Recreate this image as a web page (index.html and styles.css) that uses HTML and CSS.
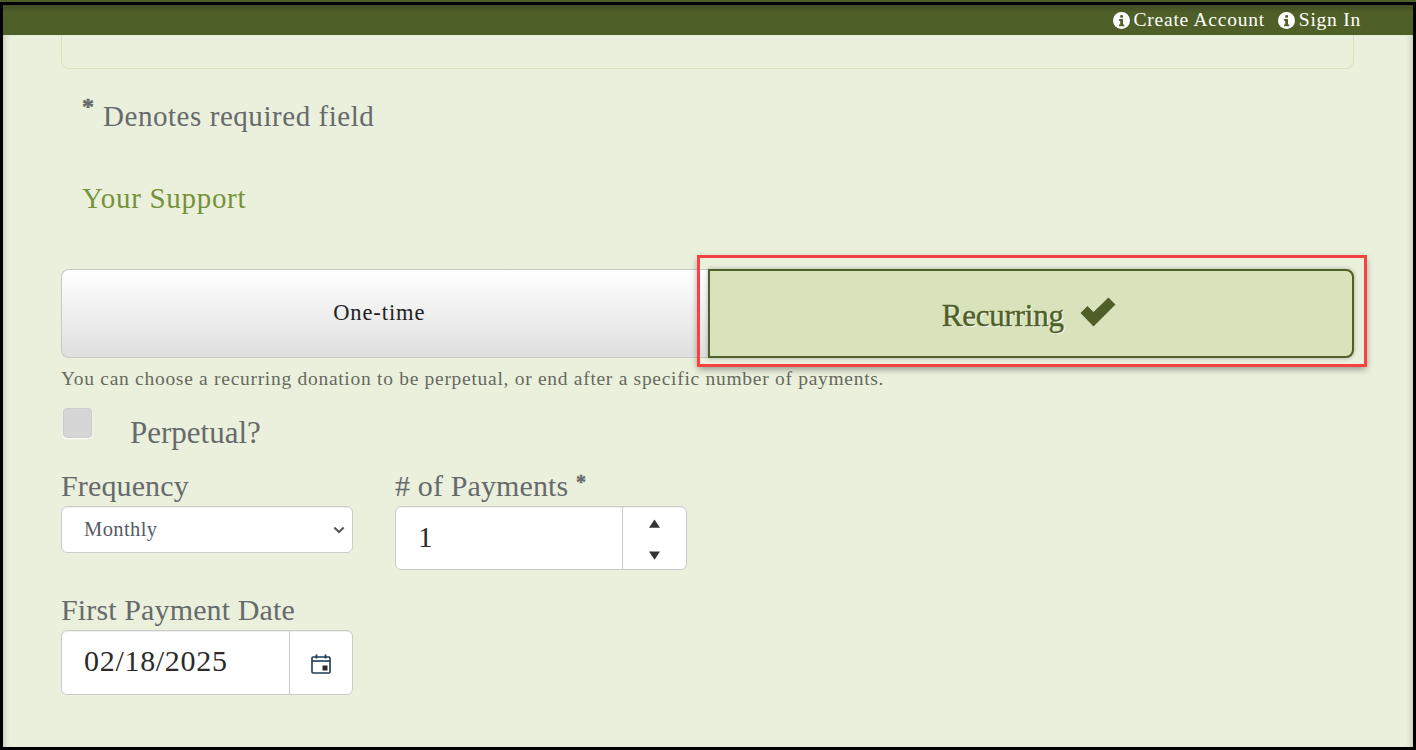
FILE: index.html
```html
<!DOCTYPE html>
<html lang="en">
<head>
<meta charset="utf-8">
<title>Your Support</title>
<link rel="stylesheet" href="styles.css">
</head>
<body>
<div class="frame">
  <header class="topbar">
    <a class="toplink"><svg class="info" viewBox="0 0 16 16"><circle cx="8" cy="8" r="8" fill="#fff"/><rect x="6.800" y="3" width="2.600" height="2.400" fill="#4f5f28"/><path d="M5.600 6.700h3.800v5h1.200v1.600H5.600v-1.600h1.200V8.300H5.600z" fill="#4f5f28"/></svg>Create Account</a>
    <a class="toplink"><svg class="info" viewBox="0 0 16 16"><circle cx="8" cy="8" r="8" fill="#fff"/><rect x="6.800" y="3" width="2.600" height="2.400" fill="#4f5f28"/><path d="M5.600 6.700h3.800v5h1.200v1.600H5.600v-1.600h1.200V8.300H5.600z" fill="#4f5f28"/></svg>Sign In</a>
  </header>
  <main class="content">
    <div class="panel-end"></div>
    <p class="required"><span class="star">*</span>Denotes required field</p>
    <h2 class="section">Your Support</h2>
    <div class="toggle">
      <button class="opt opt-off" type="button">One-time</button>
      <div class="opt-wrap">
        <button class="opt opt-on" type="button">Recurring<svg class="check" viewBox="0 0 36 30"><path d="M.5 16 7.500 9 13.500 15 28.500 .5 35.500 7.500 13.500 29.500z" fill="#4f5f28"/></svg></button>
      </div>
    </div>
    <p class="hint">You can choose a recurring donation to be perpetual, or end after a specific number of payments.</p>
    <label class="perpetual"><span class="box"></span><span class="perp-text">Perpetual?</span></label>
    <div class="row">
      <div class="field">
        <label class="lbl">Frequency</label>
        <div class="select"><span>Monthly</span><svg class="chev" viewBox="0 0 12 8"><path d="M1.300 1.500 6 6l4.700-4.500" fill="none" stroke="#555" stroke-width="2"/></svg></div>
      </div>
      <div class="field">
        <label class="lbl"># of Payments <span class="lbl-star">*</span></label>
        <div class="group"><span class="val">1</span><span class="addon spin"><svg viewBox="0 0 12 9" class="tri"><path d="M6 0 12 9H0z" fill="#333"/></svg><svg viewBox="0 0 12 9" class="tri"><path d="M6 9 12 0H0z" fill="#333"/></svg></span></div>
      </div>
    </div>
    <div class="field date">
      <label class="lbl">First Payment Date</label>
      <div class="group group-date"><span class="val dateval">02/18/2025</span><span class="addon addon-date"><svg class="cal" viewBox="0 0 20 20"><rect x="1" y="3" width="18" height="16" rx="1" fill="none" stroke="#1f3a5a" stroke-width="1.600"/><path d="M1 7h18" stroke="#1f3a5a" stroke-width="1.600"/><path d="M5.500 0.500v4M14.500 0.500v4" stroke="#1f3a5a" stroke-width="1.800"/><rect x="11.500" y="11.500" width="5" height="5" fill="#2b2b2b"/></svg></span></div>
    </div>
  </main>
</div>
</body>
</html>
```
FILE: styles.css
```css
* { box-sizing: border-box; }
html, body { margin: 0; height: 100%; }
body { background: #4f5f28; overflow: hidden; font-family: "Liberation Serif", "Times New Roman", serif; }
.frame {
  width: 1416px; height: 748px; margin-top: 2px;
  border: 3px solid #000;
  background: #ebf0dc; display: flex; flex-direction: column; overflow: hidden;
}
.topbar {
  height: 30px; flex: none; background: linear-gradient(#414c24 0, #4f5f28 8px);
  display: flex; justify-content: flex-end; align-items: center; gap: 13px; padding-right: 52px;
}
.toplink { color: #fff; font-size: 19.500px; letter-spacing: .75px; display: flex; align-items: center; gap: 4px; white-space: nowrap; }
.info { width: 17px; height: 17px; }
.content { flex: 1; padding: 0 59px 0 58px; position: relative; box-shadow: inset 6px 0 6px -5px rgba(0,0,0,.2), inset -6px 0 6px -5px rgba(0,0,0,.2); }
.panel-end { height: 34px; border: 1px solid #d8e3bc; border-top: 0; border-radius: 0 0 8px 8px; }
.required { margin: 30px 0 0 21px; font-size: 29px; line-height: 34px; letter-spacing: .55px; color: #666a6c; display: flex; }
.star { font-size: 24px; line-height: 15px; font-weight: 700; margin-right: 9px; letter-spacing: 0; -webkit-text-stroke: .5px #666a6c; }
.section { margin: 48px 0 0 21px; font-size: 29px; line-height: 34px; letter-spacing: .7px; font-weight: 400; color: #76923a; }
.toggle { display: grid; grid-template-columns: 1fr 1fr; margin-top: 54px; height: 89px; }
.opt { font-family: inherit; display: flex; align-items: center; justify-content: center; width: 100%; height: 89px; padding: 0; }
.opt-off { background: linear-gradient(#fff, #dfdfdf); border: 1px solid #c8c8c8; border-right: 0; border-radius: 8px 0 0 8px; font-size: 22.500px; letter-spacing: .9px; color: #222; padding: 0 11px 2px 0; }
.opt-wrap { outline: 3px solid #f54343; box-shadow: 0 3px 7px 2px rgba(0,0,0,.4); padding: 11px 10px 6px 8px; margin: -11px -10px -6px -8px; height: 106px; position: relative; z-index: 1; }
.opt-on { background: #d8e3bc; border: 2px solid #4f5f28; border-radius: 0 8px 8px 0; color: #4f5f28; font-size: 31px; letter-spacing: -.2px; -webkit-text-stroke: .4px #4f5f28; text-shadow: 1px 1px 0 #fff; padding: 5px 4px 0 0; box-shadow: 0 0 4px rgba(0,0,0,.3); }
.check { width: 36px; height: 30px; margin: -9px 0 0 16px; }
.hint { margin: 9px 0 0; font-size: 19.500px; line-height: 24px; letter-spacing: .71px; color: #666a5f; }
.perpetual { display: flex; margin: 17px 0 0 2px; height: 50px; }
.box { width: 29px; height: 30px; background: #d6d6d6; border: 1px solid #ccc; border-radius: 4px; box-shadow: 0 1px 1px #fff; }
.perp-text { margin: 8px 0 0 38px; font-size: 31px; line-height: 34px; color: #666a6c; }
.row { display: flex; gap: 42px; margin-top: 11px; }
.field { width: 292px; }
.lbl { display: block; font-size: 30px; line-height: 34px; letter-spacing: .13px; color: #666a6c; height: 37px; }
.lbl-star { font-size: 20px; line-height: 0; font-weight: 700; vertical-align: 7px; -webkit-text-stroke: .4px #666a6c; }
.select { height: 47px; background: #fff; border: 1px solid #ccc; border-radius: 6px; display: flex; align-items: center; justify-content: space-between; padding: 0 7px 0 22px; font-size: 20.500px; letter-spacing: .4px; color: #555b66; box-shadow: inset 0 1px 1px rgba(0,0,0,.075); }
.chev { width: 12px; height: 8px; }
.group { display: flex; height: 64px; background: #fff; border: 1px solid #ccc; border-radius: 6px; box-shadow: inset 0 1px 1px rgba(0,0,0,.075); }
.group-date { height: 65px; }
.val { flex: 1; padding-left: 22px; font-size: 29px; line-height: 60px; color: #2b2b2b; }
.dateval { font-size: 30px; letter-spacing: .7px; }
.addon { width: 64px; border-left: 1px solid #ccc; display: flex; align-items: center; justify-content: center; }
.addon-date { width: 63px; }
.spin { flex-direction: column; gap: 23px; padding-top: 3px; }
.tri { width: 11px; height: 9px; display: block; }
.cal { width: 20px; height: 20px; margin-top: 3px; }
.date { margin-top: 23px; }
```
